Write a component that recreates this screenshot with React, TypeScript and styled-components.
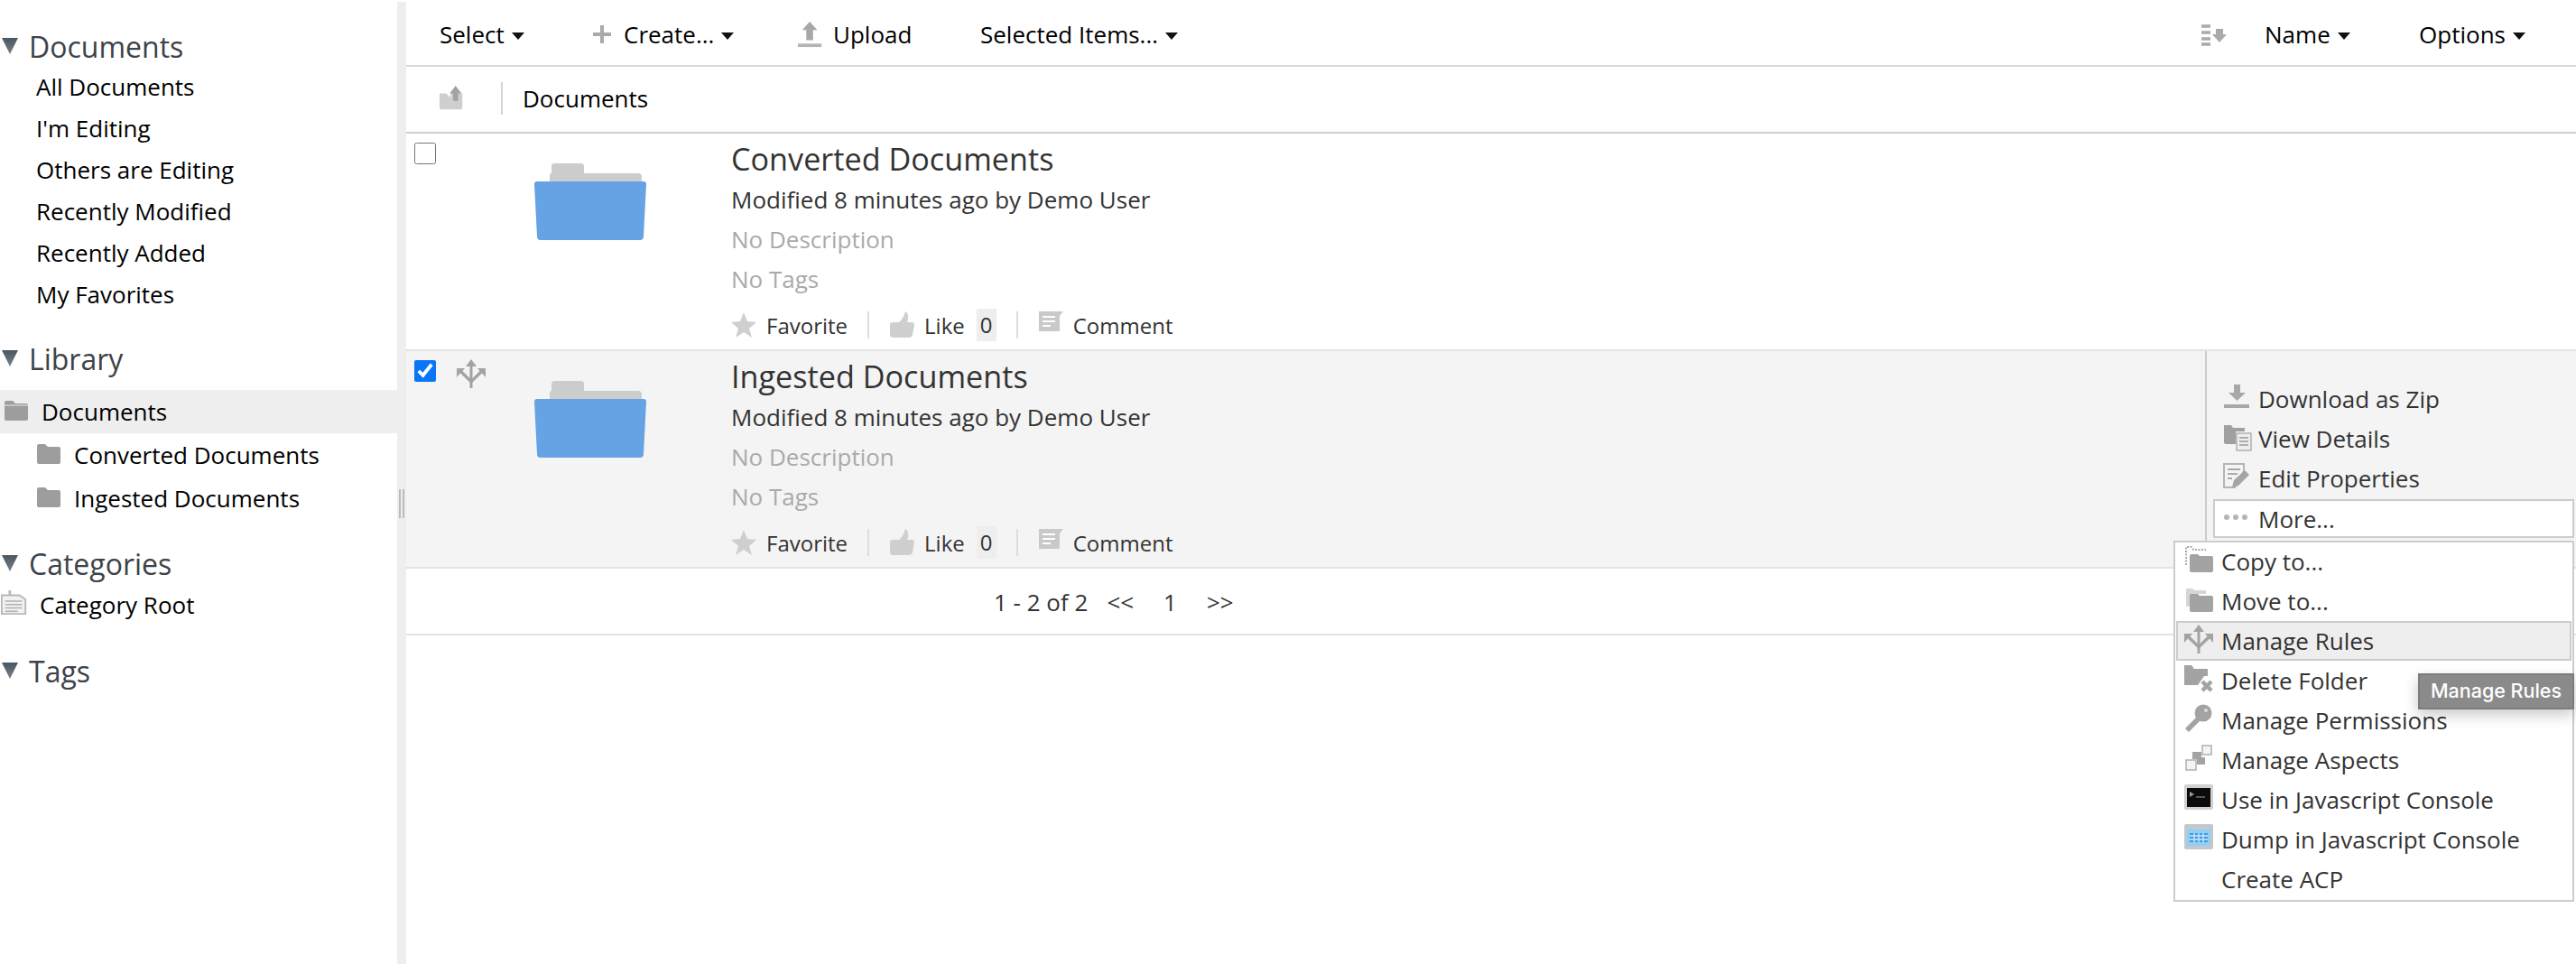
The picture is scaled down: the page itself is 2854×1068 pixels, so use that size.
import React from 'react';
import styled, { createGlobalStyle } from 'styled-components';

const GlobalStyle = createGlobalStyle`
  html, body {
    margin: 0;
    padding: 0;
    background: #fff;
    font-family: "Open Sans", "Noto Sans", sans-serif;
    color: #000;
    overflow: hidden;
  }
`;

const Page = styled.div`
  display: grid;
  grid-template-columns: 440px 10px 1fr;
  width: 2854px;
  height: 1068px;
`;

/* ---- sidebar ---- */

const Sidebar = styled.aside`
  padding-top: 27px;
`;

const Section = styled.section<{ $gap?: number }>`
  margin-bottom: ${(p) => p.$gap ?? 0}px;
`;

const SectionHead = styled.h3<{ $after?: number }>`
  display: flex;
  align-items: center;
  height: 48px;
  margin: 0 0 ${(p) => p.$after ?? 0}px;
  font-size: 32px;
  font-weight: 400;
  color: #3c4349;
`;

const Triangle = styled.svg`
  width: 20px;
  height: 20px;
  margin: 0 11px 0 1px;
  flex: none;
`;

const NavItem = styled.div`
  height: 46px;
  line-height: 46px;
  padding-left: 40px;
  font-size: 26px;
`;

const NavList = styled.div`
  margin-top: -2px;
`;

const TreeRow = styled.div<{ $active?: boolean; $indent: number }>`
  display: flex;
  align-items: center;
  height: 48px;
  padding-left: ${(p) => p.$indent}px;
  font-size: 26px;
  background: ${(p) => (p.$active ? '#eeeeee' : 'transparent')};
  svg {
    margin-right: 13px;
    margin-top: -6px;
    flex: none;
  }
`;

const Splitter = styled.div`
  position: relative;
  background: #eeeeee;
  margin-top: 2px;
  &::after {
    content: '';
    position: absolute;
    left: 2px;
    top: 540px;
    width: 2px;
    height: 32px;
    border-left: 2px solid #bbb;
    border-right: 2px solid #bbb;
  }
`;

/* ---- main ---- */

const Main = styled.main`
  min-width: 0;
`;

const Toolbar = styled.div`
  display: flex;
  align-items: center;
  height: 68px;
  padding: 4px 56px 0 37px;
  border-bottom: 2px solid #d9d9d9;
  font-size: 26px;
`;

const ToolButton = styled.div<{ $w?: number }>`
  display: flex;
  align-items: center;
  width: ${(p) => (p.$w ? `${p.$w}px` : 'auto')};
  flex: none;
  white-space: nowrap;
`;

const ToolLabel = styled.span<{ $left: number }>`
  margin-left: ${(p) => p.$left}px;
`;

const Caret = styled.span`
  display: inline-block;
  width: 0;
  height: 0;
  margin-left: 8px;
  margin-top: 3px;
  border-left: 7px solid transparent;
  border-right: 7px solid transparent;
  border-top: 8px solid #111;
`;

const Spacer = styled.div`
  flex: 1;
`;

const Breadcrumb = styled.div`
  display: flex;
  align-items: center;
  height: 70px;
  padding: 0 0 2px 36px;
  border-bottom: 2px solid #cfcfcf;
  font-size: 26px;
`;

const CrumbDivider = styled.div`
  width: 2px;
  height: 36px;
  margin: 0 22px 0 39px;
  background: #d4d4d4;
`;

const ItemRow = styled.div<{ $selected?: boolean }>`
  position: relative;
  display: grid;
  grid-template-columns: 141px 219px 1fr;
  height: 239px;
  border-bottom: 2px solid #e3e3e3;
  background: ${(p) => (p.$selected ? '#f4f4f4' : '#fff')};
`;

const SelectCell = styled.div`
  display: flex;
  align-items: flex-start;
  gap: 23px;
  padding: 9px 0 0 9px;
`;

const Check = styled.input`
  width: 24px;
  height: 26px;
  margin: 0;
  accent-color: #0a76f6;
  flex: none;
`;

const ThumbCell = styled.div`
  padding-top: 32px;
`;

const Info = styled.div`
  padding-top: 5px;
  font-size: 26px;
  color: #333;
`;

const Title = styled.div`
  height: 46px;
  line-height: 46px;
  font-size: 34.2px;
`;

const Line = styled.div<{ $muted?: boolean }>`
  height: 44px;
  line-height: 44px;
  color: ${(p) => (p.$muted ? '#aaaaaa' : '#333')};
`;

const Social = styled.div`
  display: flex;
  align-items: center;
  height: 52px;
  margin-top: 3px;
  font-size: 24px;
`;

const SocialLink = styled.span`
  display: flex;
  align-items: center;
  gap: 11px;
`;

const SocialDivider = styled.span`
  width: 2px;
  height: 30px;
  margin: 0 22px;
  background: #dddddd;
`;

const LikeCount = styled.span`
  margin-left: 13px;
  width: 22px;
  height: 36px;
  line-height: 36px;
  text-align: center;
  background: #eeeeee;
`;

const RaisedIcon = styled.span`
  display: flex;
  margin-top: -8px;
`;

const Pager = styled.div`
  display: flex;
  align-items: center;
  height: 74px;
  padding: 1px 0 0 651px;
  box-sizing: border-box;
  border-bottom: 2px solid #e3e3e3;
  font-size: 26px;
  color: #333;
`;

const PagerLink = styled.span<{ $left: number }>`
  margin-left: ${(p) => p.$left}px;
`;

/* ---- actions and menu ---- */

const Actions = styled.div`
  position: absolute;
  top: 0;
  right: 0;
  bottom: 0;
  width: 411px;
  border-left: 2px solid #cccccc;
  padding: 31px 0 0 7px;
  box-sizing: border-box;
  font-size: 26px;
  color: #333;
`;

const ActionRow = styled.div`
  display: flex;
  align-items: center;
  height: 44px;
  padding-left: 11px;
  svg {
    flex: none;
    margin-right: 7px;
    margin-top: -4px;
  }
`;

const MoreRow = styled(ActionRow)`
  width: 400px;
  height: 43px;
  box-sizing: border-box;
  margin-top: 1px;
  padding-left: 9px;
  border: 2px solid #cccccc;
  background: #fff;
`;

const Menu = styled.div`
  position: absolute;
  z-index: 5;
  top: 210px;
  right: 2px;
  width: 444px;
  height: 400px;
  box-sizing: border-box;
  border: 2px solid #cccccc;
  background: #fff;
  font-size: 26px;
  color: #333;
`;

const MenuRows = styled.div`
  margin-top: -1px;
`;

const MenuRow = styled.div<{ $active?: boolean }>`
  display: flex;
  align-items: center;
  height: 44px;
  box-sizing: border-box;
  padding-left: ${(p) => (p.$active ? '7px' : '10px')};
  ${(p) => p.$active && 'margin: 0 1px; border: 2px solid #cccccc; background: #eeeeee;'}
  svg {
    flex: none;
    margin-right: 9px;
    margin-top: -4px;
  }
`;

const IconGap = styled.span`
  width: 41px;
`;

const Tooltip = styled.div`
  position: absolute;
  z-index: 6;
  top: 357px;
  right: 2px;
  width: 173px;
  height: 40px;
  box-sizing: border-box;
  line-height: 34px;
  text-align: center;
  font-family: Inter, "Open Sans", sans-serif;
  font-size: 21.5px;
  font-weight: 500;
  color: #fff;
  background: #8a8a8a;
  border: 2px solid #7c7c7c;
  box-shadow: 0 6px 16px rgba(0, 0, 0, 0.22);
`;

/* ---- drawings ---- */

const Ico = ({ w = 32, h = 32, vb = '0 0 32 32', children }: { w?: number; h?: number; vb?: string; children: React.ReactNode }) => (
  <svg width={w} height={h} viewBox={vb}>
    {children}
  </svg>
);

const folderPath = 'M2 6 Q2 4 4 4 H11 L14 7 H26 Q28 7 28 9 V24 Q28 26 26 26 H4 Q2 26 2 24 Z';

const rulesArrows = (
  <>
    <path d="M14.5 8 H17.5 V32 H14.5 Z" fill="#a3a3a3" />
    <path d="M16 0 L22 8 H10 Z" fill="#a3a3a3" />
    <path d="M0 10 H9 L6.5 13 L16 22.5 V27 L4 15.5 L0 20 Z" fill="#a3a3a3" />
    <path d="M32 10 H23 L25.5 13 L16 22.5 V27 L28 15.5 L32 20 Z" fill="#a3a3a3" />
  </>
);

const icons: Record<string, React.ReactNode> = {
  download: (
    <>
      <path d="M12 2 H19 V11 H25 L15.5 20 L6 11 H12 Z" fill="#a8a8a8" />
      <rect x="1" y="24" width="28" height="4" fill="#a8a8a8" />
    </>
  ),
  details: (
    <>
      <path d="M1 3 H9 L11 6 H24 V10 H14 V24 H3 Q1 24 1 22 Z" fill="#a0a0a0" />
      <rect x="15" y="12" width="16" height="19" fill="#eee" stroke="#b0b0b0" strokeWidth="1.5" />
      <path d="M18 17 H28 M18 21 H28 M18 25 H28" stroke="#999" strokeWidth="1.6" />
    </>
  ),
  edit: (
    <>
      <path d="M1 2 H23 V10 L13 28 H1 Z" fill="#f4f4f4" stroke="#b5b5b5" strokeWidth="2" />
      <path d="M5 8 H19 M5 13 H16 M5 18 H10" stroke="#aaa" strokeWidth="2" />
      <path d="M10 28 L12 20 L24 9 L29 14 L17 26 Z" fill="#a5a5a5" />
    </>
  ),
  more: (
    <>
      <circle cx="4" cy="16" r="3" fill="#b5b5b5" />
      <circle cx="14" cy="16" r="3" fill="#b5b5b5" />
      <circle cx="24" cy="16" r="3" fill="#b5b5b5" />
    </>
  ),
  copy: (
    <>
      <path d="M2 22 V2 H8 L10 5 H24" fill="none" stroke="#aaa" strokeWidth="2" strokeDasharray="2 1.5" />
      <path d="M6 12 Q6 10 8 10 H15 L17 12 H30 Q32 12 32 14 V28 Q32 30 30 30 H8 Q6 30 6 28 Z" fill="#a3a3a3" />
    </>
  ),
  move: (
    <>
      <path d="M2 4 H9 L11 6 H24 V10 H8 V24 H2 Z" fill="#d6d6d6" />
      <path d="M6 12 Q6 10 8 10 H15 L17 12 H30 Q32 12 32 14 V28 Q32 30 30 30 H8 Q6 30 6 28 Z" fill="#a3a3a3" />
    </>
  ),
  rules: rulesArrows,
  del: (
    <>
      <path d="M0 1 H8 L11 5 H26 V13 H22 L15 23 H0 Z" fill="#a3a3a3" />
      <path d="M20 19 L30 29 M30 19 L20 29" stroke="#a3a3a3" strokeWidth="4.5" />
    </>
  ),
  key: (
    <>
      <circle cx="21" cy="10" r="9.5" fill="#a3a3a3" />
      <path d="M16 12 L1 27 L5 31 L20 16 Z" fill="#a3a3a3" />
      <circle cx="24" cy="7" r="2" fill="#ddd" />
    </>
  ),
  aspects: (
    <>
      <rect x="2" y="18" width="11" height="11" fill="#f4f4f4" stroke="#b5b5b5" strokeWidth="1.6" />
      <rect x="20" y="2" width="10" height="10" fill="#f4f4f4" stroke="#b5b5b5" strokeWidth="1.6" />
      <rect x="9" y="9" width="10" height="8" fill="#a3a3a3" />
      <rect x="14" y="15" width="9" height="8" fill="#a3a3a3" />
    </>
  ),
  console: (
    <>
      <rect x="0" y="1" width="32" height="28" rx="2" fill="#d0d0d0" />
      <rect x="3" y="5" width="26" height="21" fill="#0b0b0b" />
      <path d="M6 9 L11 12 L6 15 Z" fill="#9a9a9a" />
      <rect x="13" y="14" width="10" height="2" fill="#555" />
    </>
  ),
  dump: (
    <>
      <rect x="0" y="1" width="32" height="28" rx="2" fill="#c4c8cc" />
      <rect x="3" y="7" width="26" height="18" fill="#8fd0f5" />
      <path d="M6 11 H26 V21 H6 Z" fill="#3f9be6" />
      <path d="M6 14 H26 M6 18 H26 M11 11 V21 M16 11 V21 M21 11 V21" stroke="#cfeafb" strokeWidth="1.4" />
    </>
  ),
};

const Icon = ({ name }: { name: string }) => <Ico>{icons[name]}</Ico>;

const TreeFolder = ({ open }: { open?: boolean }) => (
  <Ico vb="0 0 30 26" w={30} h={26}>
    <path d={folderPath} fill="#9d9d9d" />
    {open && <path d="M2 9 H28" stroke="#ddd" strokeWidth="1.2" />}
  </Ico>
);

const BigFolder = () => (
  <svg width="126" height="88" viewBox="0 0 126 88">
    <path d="M18 22 V14 Q18 12 20 12 H20 V4 Q20 1 24 1 H52 Q56 1 56 4 V12 H116 Q120 12 120 16 V24 H18 Z" fill="#cccccc" />
    <path d="M1 24 Q1 21 4 21 H122 Q125 21 125 24 L122 82 Q122 86 118 86 H8 Q4 86 4 82 Z" fill="#66a3e4" />
  </svg>
);

const SectionTriangle = () => (
  <Triangle viewBox="0 0 20 20">
    <defs>
      <linearGradient id="tri" x1="0" y1="0" x2="0" y2="1">
        <stop offset="0" stopColor="#4a5660" />
        <stop offset="1" stopColor="#76818a" />
      </linearGradient>
    </defs>
    <path d="M1 1 H19 L10 19 Z" fill="url(#tri)" />
  </Triangle>
);

const StarIcon = () => (
  <Ico w={28} h={28} vb="0 0 28 28">
    <path d="M14 0 L18 10 L28 11 L20 18 L23 28 L14 22 L5 28 L8 18 L0 11 L10 10 Z" fill="#cfcfcf" />
  </Ico>
);

const ThumbIcon = () => (
  <Ico w={28} h={30} vb="0 0 28 30">
    <path d="M1 14 Q1 12 5 12 H11 Q16 8 18 0 Q22 2 21 9 L20 12 H25 Q28 12 28 15 L26 26 Q25 29 22 29 H5 Q1 29 1 26 Z" fill="#cfcfcf" />
  </Ico>
);

const CommentIcon = () => (
  <RaisedIcon>
    <Ico w={28} h={24} vb="0 0 28 24">
      <path d="M1 1 H28 L24 6 V23 H1 Z" fill="#c9c9c9" />
      <path d="M5 7 H19 M5 12 H19 M5 17 H14" stroke="#fff" strokeWidth="2" />
    </Ico>
  </RaisedIcon>
);

const sidebarItems = ['All Documents', "I'm Editing", 'Others are Editing', 'Recently Modified', 'Recently Added', 'My Favorites'];

const menuItems = [
  { icon: 'copy', label: 'Copy to...' },
  { icon: 'move', label: 'Move to...' },
  { icon: 'rules', label: 'Manage Rules', active: true },
  { icon: 'del', label: 'Delete Folder' },
  { icon: 'key', label: 'Manage Permissions' },
  { icon: 'aspects', label: 'Manage Aspects' },
  { icon: 'console', label: 'Use in Javascript Console' },
  { icon: 'dump', label: 'Dump in Javascript Console' },
];

const RowBody = ({ name }: { name: string }) => (
  <>
    <ThumbCell>
      <BigFolder />
    </ThumbCell>
    <Info>
      <Title>{name}</Title>
      <Line>Modified 8 minutes ago by Demo User</Line>
      <Line $muted>No Description</Line>
      <Line $muted>No Tags</Line>
      <Social>
        <SocialLink>
          <StarIcon />
          Favorite
        </SocialLink>
        <SocialDivider />
        <SocialLink>
          <ThumbIcon />
          Like
        </SocialLink>
        <LikeCount>0</LikeCount>
        <SocialDivider />
        <SocialLink>
          <CommentIcon />
          Comment
        </SocialLink>
      </Social>
    </Info>
  </>
);

export default function App() {
  return (
    <Page>
      <GlobalStyle />
      <Sidebar>
        <Section $gap={24}>
          <SectionHead>
            <SectionTriangle />
            Documents
          </SectionHead>
          <NavList>
            {sidebarItems.map((item) => (
              <NavItem key={item}>{item}</NavItem>
            ))}
          </NavList>
        </Section>
        <Section $gap={24}>
          <SectionHead $after={11}>
            <SectionTriangle />
            Library
          </SectionHead>
          <TreeRow $active $indent={3}>
            <TreeFolder open />
            Documents
          </TreeRow>
          <TreeRow $indent={39}>
            <TreeFolder />
            Converted Documents
          </TreeRow>
          <TreeRow $indent={39}>
            <TreeFolder />
            Ingested Documents
          </TreeRow>
        </Section>
        <Section $gap={25}>
          <SectionHead $after={-2}>
            <SectionTriangle />
            Categories
          </SectionHead>
          <TreeRow $indent={1}>
            <Ico w={30} h={32}>
              <path d="M1 8 H10 V3 H11 V8 H22 L29 13 V30 H1 Z" fill="#f2f2f2" stroke="#b8b8b8" strokeWidth="2" />
              <path d="M5 15 H25 M5 19 H25 M5 23 H25 M5 27 H20" stroke="#b0b0b0" strokeWidth="1.6" />
            </Ico>
            Category Root
          </TreeRow>
        </Section>
        <Section>
          <SectionHead>
            <SectionTriangle />
            Tags
          </SectionHead>
        </Section>
      </Sidebar>
      <Splitter />
      <Main>
        <Toolbar>
          <ToolButton $w={168}>
            Select
            <Caret />
          </ToolButton>
          <ToolButton $w={228}>
            <Ico w={24} h={24} vb="0 0 24 24">
              <path d="M12 2 V22 M2 12 H22" stroke="#aaa" strokeWidth="4" />
            </Ico>
            <ToolLabel $left={12}>Create...</ToolLabel>
            <Caret />
          </ToolButton>
          <ToolButton $w={203}>
            <Ico w={30} h={32}>
              <path d="M15 1 L24 11 H19 V23 H11 V11 H6 Z" fill="#a8a8a8" />
              <rect x="1" y="27" width="28" height="4" fill="#b4b4b4" />
            </Ico>
            <ToolLabel $left={10}>Upload</ToolLabel>
          </ToolButton>
          <ToolButton>
            Selected Items...
            <Caret />
          </ToolButton>
          <Spacer />
          <ToolButton $w={71}>
            <Ico w={30} h={26} vb="0 0 30 26">
              <path d="M1 4 H11 M1 11 H11 M1 18 H11 M1 24 H11" stroke="#aaa" strokeWidth="3.4" />
              <path d="M17 7 H25 V13 H29 L21 22 L13 13 H17 Z" fill="#aaa" />
            </Ico>
          </ToolButton>
          <ToolButton $w={171}>
            Name
            <Caret />
          </ToolButton>
          <ToolButton>
            Options
            <Caret />
          </ToolButton>
        </Toolbar>
        <Breadcrumb>
          <Ico w={30} h={30}>
            <path d="M1 10 H9 L13 14 H28 V27 Q28 29 26 29 H3 Q1 29 1 27 Z" fill="#cfcfcf" />
            <path d="M14 10 H28 V16 H14 Z" fill="#cfcfcf" />
            <path d="M20 1 L27 10 H23 V19 H17 V10 H13 Z" fill="#a3a3a3" />
          </Ico>
          <CrumbDivider />
          Documents
        </Breadcrumb>
        <ItemRow>
          <SelectCell>
            <Check type="checkbox" readOnly />
          </SelectCell>
          <RowBody name="Converted Documents" />
        </ItemRow>
        <ItemRow $selected>
          <SelectCell>
            <Check type="checkbox" checked readOnly />
            <Ico>{rulesArrows}</Ico>
          </SelectCell>
          <RowBody name="Ingested Documents" />
          <Actions>
            <ActionRow>
              <Icon name="download" />
              Download as Zip
            </ActionRow>
            <ActionRow>
              <Icon name="details" />
              View Details
            </ActionRow>
            <ActionRow>
              <Icon name="edit" />
              Edit Properties
            </ActionRow>
            <MoreRow>
              <Icon name="more" />
              More...
            </MoreRow>
            <Menu>
              <MenuRows>
                {menuItems.map((m) => (
                  <MenuRow key={m.label} $active={m.active}>
                    <Icon name={m.icon} />
                    {m.label}
                  </MenuRow>
                ))}
                <MenuRow>
                  <IconGap />
                  Create ACP
                </MenuRow>
              </MenuRows>
            </Menu>
            <Tooltip>Manage Rules</Tooltip>
          </Actions>
        </ItemRow>
        <Pager>
          1 - 2 of 2
          <PagerLink $left={21}>&lt;&lt;</PagerLink>
          <PagerLink $left={33}>1</PagerLink>
          <PagerLink $left={33}>&gt;&gt;</PagerLink>
        </Pager>
      </Main>
    </Page>
  );
}
